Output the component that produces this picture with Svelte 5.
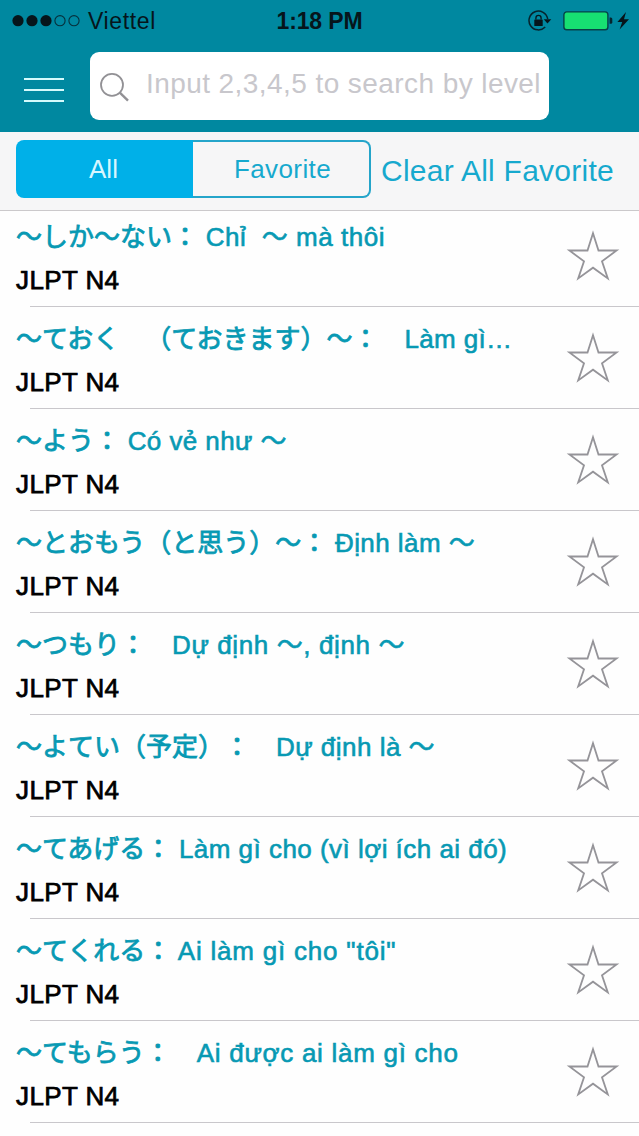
<script>
  const entries = [
    { jp: '～しか～ない：', vi: ' Chỉ  ～ mà thôi', width: 187 },
    { jp: '～ておく　（ておきます）～：　', vi: 'Làm gì…', width: 108 },
    { jp: '～よう：', vi: ' Có vẻ như ～', width: 167 },
    { jp: '～とおもう（と思う）～：', vi: ' Định làm ～', width: 148 },
    { jp: '～つもり：　', vi: 'Dự định ～, định ～', width: 233 },
    { jp: '～よてい（予定）：　', vi: 'Dự định là ～', width: 159 },
    { jp: '～てあげる：', vi: ' Làm gì cho (vì lợi ích ai đó)', width: 336 },
    { jp: '～てくれる：', vi: ' Ai làm gì cho "tôi"', width: 225 },
    { jp: '～てもらう：　', vi: 'Ai được ai làm gì cho', width: 262 }
  ];

  // Spreads a run of text evenly so it fills the given width.
  function fit(node, width) {
    const count = [...node.textContent].length;
    node.style.letterSpacing = `${(width - node.getBoundingClientRect().width) / count}px`;
  }
</script>

<div class="screen">
  <header>
    <div class="status">
      <div class="carrier">
        <svg width="70" height="16" viewBox="0 0 70 16">
          <g fill="#06151b"><circle cx="6" cy="7.7" r="5.6" /><circle cx="20" cy="7.7" r="5.6" /><circle cx="34" cy="7.7" r="5.6" /></g>
          <g fill="none" stroke="#06303c" stroke-width="1.1"><circle cx="48" cy="7.7" r="5.1" /><circle cx="62" cy="7.7" r="5.1" /></g>
        </svg>
        <span use:fit={68}>Viettel</span>
      </div>
      <div class="time"><span use:fit={86}>1:18 PM</span></div>
      <svg class="indicators" width="105" height="24" viewBox="0 0 105 24">
        <path d="M17.2 18A9.4 9.4 0 1 1 19.7 10" fill="none" stroke="#06242d" stroke-width="1.5" />
        <path d="M15.7 10.2H23.3L19.5 14.6Z" fill="#06151b" />
        <rect x="6.3" y="10.4" width="8.4" height="6.6" rx=".6" fill="#06151b" />
        <path d="M7.9 10.6V8.9a2.6 2.6 0 0 1 5.2 0V10.6" fill="none" stroke="#06151b" stroke-width="1.3" />
        <rect x="35.9" y="2.9" width="44" height="17.9" rx="2.8" fill="#17e072" stroke="#064348" stroke-width="1.4" />
        <path d="M81.6 8.5h1.2q1.5 0 1.5 1.5v3.3q0 1.5-1.5 1.5h-1.2z" fill="#06242d" />
        <path d="M98 3 89.4 13h4.8l-2.6 7.6 9.4-10.4h-5z" fill="#06151b" />
      </svg>
    </div>
    <div class="nav">
      <div class="menu"><i></i><i></i><i></i></div>
      <div class="search">
        <svg width="32" height="32" viewBox="0 0 32 32" fill="none" stroke="#929195">
          <circle cx="12" cy="12.8" r="11" stroke-width="1.8" />
          <path d="M19.8 20.7 28 28.7" stroke-width="2.4" />
        </svg>
        <span use:fit={395}>Input 2,3,4,5 to search by level</span>
      </div>
    </div>
  </header>

  <div class="filters">
    <div class="segments">
      <div class="segment active"><span use:fit={29}>All</span></div>
      <div class="segment"><span use:fit={97}>Favorite</span></div>
    </div>
    <div class="clear"><span use:fit={233}>Clear All Favorite</span></div>
  </div>

  <main>
    {#each entries as entry}
      <div class="row">
        <div class="text">
          <div class="title"><span class="jp">{entry.jp}</span><span use:fit={entry.width}>{entry.vi}</span></div>
          <div class="level"><span use:fit={103.5}>JLPT N4</span></div>
        </div>
        <svg class="star" width="54" height="54" viewBox="0 0 54 54">
          <path d="M27 4.2 32.5 21.5H50.6L36 32.3 41.8 49.4 27 38.7 12.2 49.4 18 32.3 3.4 21.5H21.5Z" fill="none" stroke="#959499" stroke-width="1.8" />
        </svg>
      </div>
    {/each}
  </main>
</div>

<style>
  :global(body) { margin: 0; background: #fff; }
  .screen {
    width: 639px;
    height: 1136px;
    overflow: hidden;
    background: #fefefe;
    font-family: "Liberation Sans", "Noto Sans CJK JP", sans-serif;
    font-size: 26px;
    text-spacing-trim: space-all;
  }
  span { display: inline-block; white-space: pre; }
  svg { display: block; flex: none; }
  header { height: 132px; background: #0088a0; box-sizing: border-box; }
  .status {
    height: 42px;
    display: grid;
    grid-template-columns: 1fr auto 1fr;
    align-items: center;
    color: #06151b;
    font-size: 23px;
    line-height: 26px;
  }
  .carrier { display: flex; align-items: center; gap: 6px; padding-left: 12px; }
  .time { font-weight: 700; }
  .indicators { justify-self: end; margin: -1px 6px 0 0; }
  .nav { display: flex; padding: 10px 0 0 24px; align-items: flex-start; }
  .menu { width: 40px; margin: 26px 26px 0 0; display: flex; flex-direction: column; gap: 9px; }
  .menu i { height: 2px; background: #d5fafc; }
  .search {
    box-sizing: border-box;
    width: 459px;
    height: 68px;
    padding: 0 8px 0 10px;
    border-radius: 9px;
    background: #fff;
    display: flex;
    align-items: center;
    gap: 14px;
    color: #c8c7cc;
    font-size: 28px;
    line-height: 32px;
  }
  .search svg { margin-top: 4px; }
  .search span { margin-top: -4px; }
  .filters {
    box-sizing: border-box;
    height: 79px;
    padding: 8px 16px 0;
    border-bottom: 1px solid #cbc9cb;
    background: #f6f6f7;
    display: flex;
    gap: 10px;
    color: #16a9ce;
  }
  .segments { width: 355px; height: 58px; display: grid; grid-template-columns: 177px 1fr; }
  .segment {
    box-sizing: border-box;
    border: 2px solid #25a5ca;
    border-left: 0;
    border-radius: 0 8px 8px 0;
    padding-left: 3px;
    display: flex;
    align-items: center;
    justify-content: center;
  }
  .segment.active {
    border: 0;
    border-radius: 8px 0 0 8px;
    padding: 0 2px 0 0;
    background: #00b0e8;
    color: #d8f6ff;
  }
  .clear { font-size: 30px; line-height: 34px; padding-top: 14px; }
  .row {
    box-sizing: border-box;
    height: 102px;
    padding: 0 19px 0 16px;
    display: flex;
    align-items: flex-end;
    justify-content: space-between;
    background: linear-gradient(#c9c7cb, #c9c7cb) 30px 100% / 609px 1px no-repeat;
  }
  .row:first-child { height: 96px; }
  .text { padding-bottom: 9px; }
  .title, .level { height: 43px; line-height: 36px; white-space: nowrap; }
  .title { color: #0799b3; -webkit-text-stroke: 0.6px; }
  .title .jp { -webkit-text-stroke: 0.8px; }
  .title span, .level span { line-height: 36px; vertical-align: top; }
  .level { color: #000; height: 36px; -webkit-text-stroke: 0.75px; }
  .star { margin-bottom: 24px; }
</style>
